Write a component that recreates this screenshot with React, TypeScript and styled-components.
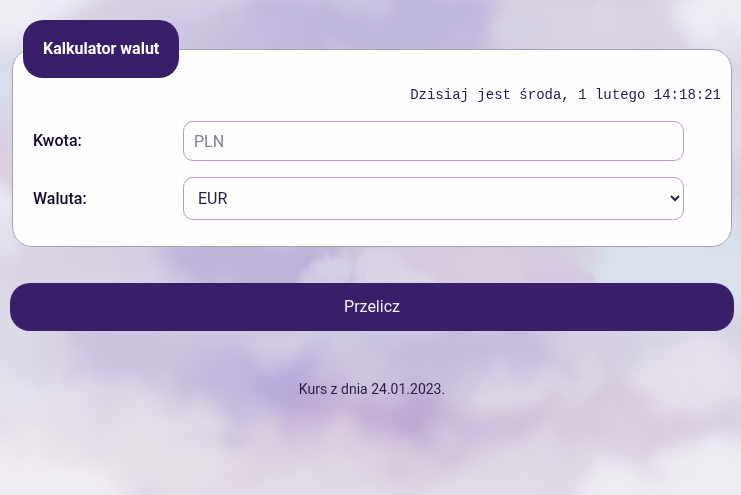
import React, { useState } from "react";
import styled, { createGlobalStyle } from "styled-components";

const GlobalStyle = createGlobalStyle`
  *, *::before, *::after { box-sizing: border-box; }
  html, body { margin: 0; min-height: 100%; }
  body {
    font-family: Roboto, "Liberation Sans", sans-serif;
    font-size: 16px;
    line-height: 20px;
    color: #2a1c49;
    background: #d6cfe3;
  }
`;

const Backdrop = styled.svg`
  position: fixed;
  inset: 0;
  width: 100%;
  height: 100%;
  z-index: -1;
`;

const Page = styled.main`
  padding: 20px 7px 20px 10px;
`;

const Panel = styled.fieldset`
  margin: 0 2px;
  padding: 8px 10px 26px;
  min-width: 0;
  border: 1px solid #a5a1ae;
  border-radius: 20px;
  background: #fefdff;
`;

const Title = styled.legend`
  padding: 19px 20px;
  border-radius: 20px;
  background: #391f69;
  color: #fff;
  font-weight: 700;
`;

const Clock = styled.p`
  margin: 0 0 17px;
  text-align: right;
  font-family: "Courier New", "Liberation Mono", monospace;
  font-size: 14px;
  line-height: 18px;
`;

const Fields = styled.div`
  display: grid;
  gap: 16px;
  padding: 0 37px 0 10px;
`;

const Field = styled.div`
  display: grid;
  grid-template-columns: 150px minmax(0, 1fr);
  align-items: center;
`;

const Label = styled.label`
  font-weight: 500;
  color: #12062d;
`;

const controlStyle = `
  width: 100%;
  padding: 10px;
  border: 1px solid #c09acb;
  border-radius: 10px;
  background: #fefdff;
  color: #2a1c49;
  font-family: inherit;
  font-size: 16px;
`;

const AmountInput = styled.input`
  ${controlStyle}
  height: 40px;
  &::placeholder { color: #85818c; }
`;

const CurrencySelect = styled.select`
  ${controlStyle}
  height: 43px;
`;

const SubmitButton = styled.button`
  display: block;
  width: 100%;
  margin-top: 36px;
  padding: 14px 20px;
  border: 0;
  border-radius: 20px;
  background: #391f69;
  color: #f3eefa;
  font-family: inherit;
  font-size: 16px;
  line-height: 20px;
  cursor: pointer;
`;

const RateNote = styled.p`
  margin: 48px 0 0;
  text-align: center;
  font-size: 14px;
`;

type Cloud = [cx: number, cy: number, rx: number, ry: number, color: string, opacity: number];

const softClouds: Cloud[] = [
  [-10, -10, 110, 50, "#f0eff5", 0.9],
  [370, 30, 150, 50, "#bbb1d9", 0.9],
  [230, 40, 70, 26, "#c5bbdd", 0.8],
  [350, -4, 40, 14, "#d8d4e8", 0.9],
  [600, 35, 110, 34, "#dad4e6", 1],
  [745, 5, 70, 50, "#efeef4", 0.9],
  [0, 85, 24, 40, "#d8e1ee", 1],
  [0, 155, 22, 32, "#dfcddd", 0.8],
  [0, 215, 28, 36, "#ecebf3", 1],
  [740, 120, 24, 50, "#e4dce8", 1],
  [260, 266, 130, 44, "#bdb2d8", 1],
  [480, 270, 120, 40, "#d6cbe0", 1],
  [690, 265, 110, 54, "#d8e1ed", 1],
  [70, 280, 100, 38, "#dbd4e5", 0.9],
  [0, 320, 40, 40, "#dedbe8", 0.9],
  [160, 355, 110, 34, "#c8bfdd", 0.9],
  [370, 345, 60, 26, "#cfcce4", 1],
  [470, 355, 100, 32, "#c3b9dc", 1],
  [690, 340, 70, 26, "#d3d2e5", 1],
  [260, 400, 110, 36, "#c0b5da", 0.9],
  [285, 375, 36, 28, "#b3a4d9", 0.8],
  [20, 400, 70, 38, "#e5e1ec", 1],
  [130, 410, 60, 30, "#e0d8e5", 1],
  [355, 410, 80, 28, "#c5b1d5", 0.9],
  [425, 418, 60, 24, "#b8a4d2", 0.9],
  [530, 425, 110, 22, "#cab9d6", 0.9],
  [520, 388, 70, 20, "#dfd8e6", 1],
  [700, 375, 70, 40, "#e6dfea", 1],
  [640, 424, 90, 24, "#d7c9dd", 0.9],
  [280, 464, 180, 36, "#dccfdf", 0.9],
  [110, 455, 130, 40, "#e5dee7", 0.9],
  [600, 470, 170, 34, "#e0d8e5", 1],
  [0, 500, 130, 50, "#f2f0f4", 0.9],
  [350, 505, 220, 26, "#e4dde7", 1],
  [730, 500, 150, 54, "#f0eef3", 0.9],
];

const crispClouds: Cloud[] = [
  [335, 265, 20, 14, "#d6d1e6", 0.9],
  [324, 282, 28, 12, "#d6d0e6", 0.8],
  [380, 264, 22, 18, "#dad3e7", 0.9],
  [400, 284, 38, 14, "#dcd6e7", 0.9],
  [490, 265, 38, 20, "#d8cde1", 0.8],
  [555, 286, 42, 18, "#d5c9df", 0.9],
  [520, 28, 32, 12, "#d6d1e5", 0.6],
  [606, 16, 17, 20, "#e0dce9", 0.3],
  [590, 372, 14, 24, "#ded7e7", 0.5],
  [505, 395, 40, 11, "#e0d9e7", 0.5],
];

function renderCloud([cx, cy, rx, ry, color, opacity]: Cloud) {
  return (
    <ellipse key={`${cx}-${cy}`} cx={cx} cy={cy} rx={rx} ry={ry} fill={color} opacity={opacity} />
  );
}

function CloudySky() {
  return (
    <Backdrop viewBox="0 0 741 495" preserveAspectRatio="xMidYMid slice" aria-hidden="true">
      <defs>
        <filter
          id="soft"
          filterUnits="userSpaceOnUse"
          x="-120"
          y="-120"
          width="981"
          height="735"
          colorInterpolationFilters="sRGB"
        >
          <feTurbulence type="fractalNoise" baseFrequency="0.016" numOctaves="4" seed="7" result="noise" />
          <feGaussianBlur in="SourceGraphic" stdDeviation="14" result="blurred" />
          <feDisplacementMap in="blurred" in2="noise" scale="70" xChannelSelector="R" yChannelSelector="G" result="warped" />
          <feGaussianBlur in="warped" stdDeviation="4" />
        </filter>
        <filter
          id="crisp"
          filterUnits="userSpaceOnUse"
          x="-20"
          y="-20"
          width="781"
          height="535"
          colorInterpolationFilters="sRGB"
        >
          <feTurbulence type="fractalNoise" baseFrequency="0.04" numOctaves="3" seed="4" result="noise" />
          <feGaussianBlur in="SourceGraphic" stdDeviation="3" result="blurred" />
          <feDisplacementMap in="blurred" in2="noise" scale="22" xChannelSelector="R" yChannelSelector="G" />
        </filter>
      </defs>
      <g filter="url(#soft)">
        <rect x="-200" y="-200" width="1141" height="895" fill="#d6cfe3" />
        {softClouds.map(renderCloud)}
      </g>
      <g filter="url(#crisp)">{crispClouds.map(renderCloud)}</g>
    </Backdrop>
  );
}

export default function App() {
  const [amount, setAmount] = useState("");
  const [currency, setCurrency] = useState("EUR");

  return (
    <>
      <GlobalStyle />
      <CloudySky />
      <Page>
        <form onSubmit={(event) => event.preventDefault()}>
          <Panel>
            <Title>Kalkulator walut</Title>
            <Clock>Dzisiaj jest środa, 1 lutego 14:18:21</Clock>
            <Fields>
              <Field>
                <Label htmlFor="amount">Kwota:</Label>
                <AmountInput
                  id="amount"
                  type="number"
                  placeholder="PLN"
                  value={amount}
                  onChange={(event) => setAmount(event.target.value)}
                />
              </Field>
              <Field>
                <Label htmlFor="currency">Waluta:</Label>
                <CurrencySelect
                  id="currency"
                  value={currency}
                  onChange={(event) => setCurrency(event.target.value)}
                >
                  <option value="EUR">EUR</option>
                </CurrencySelect>
              </Field>
            </Fields>
          </Panel>
          <SubmitButton type="submit">Przelicz</SubmitButton>
        </form>
        <RateNote>Kurs z dnia 24.01.2023.</RateNote>
      </Page>
    </>
  );
}
